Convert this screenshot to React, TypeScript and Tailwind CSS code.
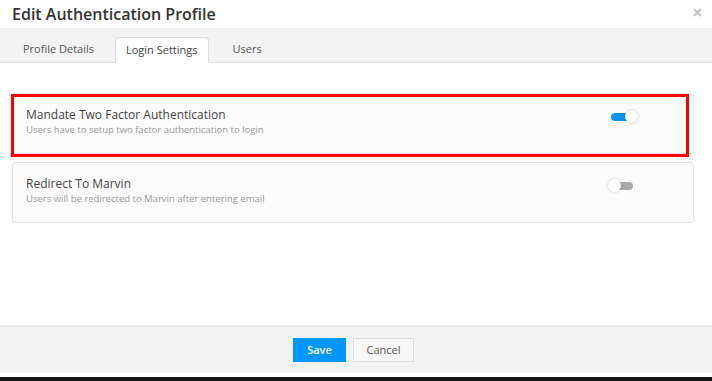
import React from "react"

const font = { fontFamily: '"Open Sans", "Noto Sans", Arial, sans-serif' }

function Toggle({ on }: { on: boolean }) {
  return (
    <div className="relative w-[30px] h-[13px] shrink-0">
      <div
        className={`absolute left-[3px] top-[2.5px] w-[22px] h-[8px] rounded-full ${
          on ? "bg-[#0a93f5]" : "bg-[#aaaaaa]"
        }`}
      />
      <div
        className={`absolute top-0 w-[13px] h-[13px] rounded-full bg-white shadow-[0_0_3px_rgba(0,0,0,0.25)] ${
          on ? "left-[17px]" : "left-0"
        }`}
      />
    </div>
  )
}

function SettingCard({
  title,
  hint,
  on,
  marked,
}: {
  title: string
  hint: string
  on: boolean
  marked?: boolean
}) {
  return (
    <div className="relative flex h-[61px] justify-between rounded-[3px] border border-[#e3e3e3] bg-[#fcfcfc] pl-[13px] pr-[55px] pt-[13px]">
      <div>
        <div className="text-[12px] leading-[16px] text-[#444]">{title}</div>
        <div className="text-[9.5px] leading-[13px] text-[#999]">{hint}</div>
      </div>
      <div className="pt-[3px]">
        <Toggle on={on} />
      </div>
      {marked && (
        <div className="absolute left-[-2px] top-0 right-[4px] bottom-[-4px] border-[3px] border-[#ff0000]" />
      )}
    </div>
  )
}

export default function App() {
  return (
    <div className="flex h-[381px] w-[712px] flex-col bg-white" style={font}>
      <div className="flex h-[28px] items-center justify-between pl-[12px] pr-[10px]">
        <h1 className="text-[16px] font-semibold leading-none text-[#333]">Edit Authentication Profile</h1>
        <svg width="9" height="9" viewBox="0 0 9 9" className="mb-[3px]">
          <path d="M1 1L8 8M8 1L1 8" stroke="#c4c4c4" strokeWidth="2" />
        </svg>
      </div>

      <div className="flex h-[35px] items-end border-b border-[#dddddd] bg-[#f3f3f3] pl-[12px]">
        <div className="flex h-[25px] items-center px-[11px] text-[11px] text-[#555]">Profile Details</div>
        <div className="mb-[-1px] ml-[10px] flex h-[26px] items-center rounded-t-[3px] border border-b-0 border-[#dddddd] bg-white px-[10px] text-[11px] text-[#444]">
          Login Settings
        </div>
        <div className="ml-[13px] flex h-[25px] items-center px-[11px] text-[11px] text-[#555]">Users</div>
      </div>

      <div className="flex flex-1 flex-col gap-[8px] pl-[12px] pr-[18px] pt-[30px]">
        <SettingCard
          title="Mandate Two Factor Authentication"
          hint="Users have to setup two factor authentication to login"
          on
          marked
        />
        <SettingCard
          title="Redirect To Marvin"
          hint="Users will be redirected to Marvin after entering email"
          on={false}
        />
      </div>

      <div className="flex h-[48px] items-center justify-center gap-[7px] border-t-2 border-[#ebebeb] bg-[#f3f3f3] pr-[5px]">
        <button className="h-[24px] w-[53px] bg-[#0096ff] text-[11px] font-semibold text-white">Save</button>
        <button className="h-[24px] w-[61px] border border-[#dddddd] bg-[#f7f7f7] text-[11px] text-[#555]">
          Cancel
        </button>
      </div>
      <div className="h-[4px] bg-white" />
      <div className="h-[4px] bg-[#111]" />
    </div>
  )
}
